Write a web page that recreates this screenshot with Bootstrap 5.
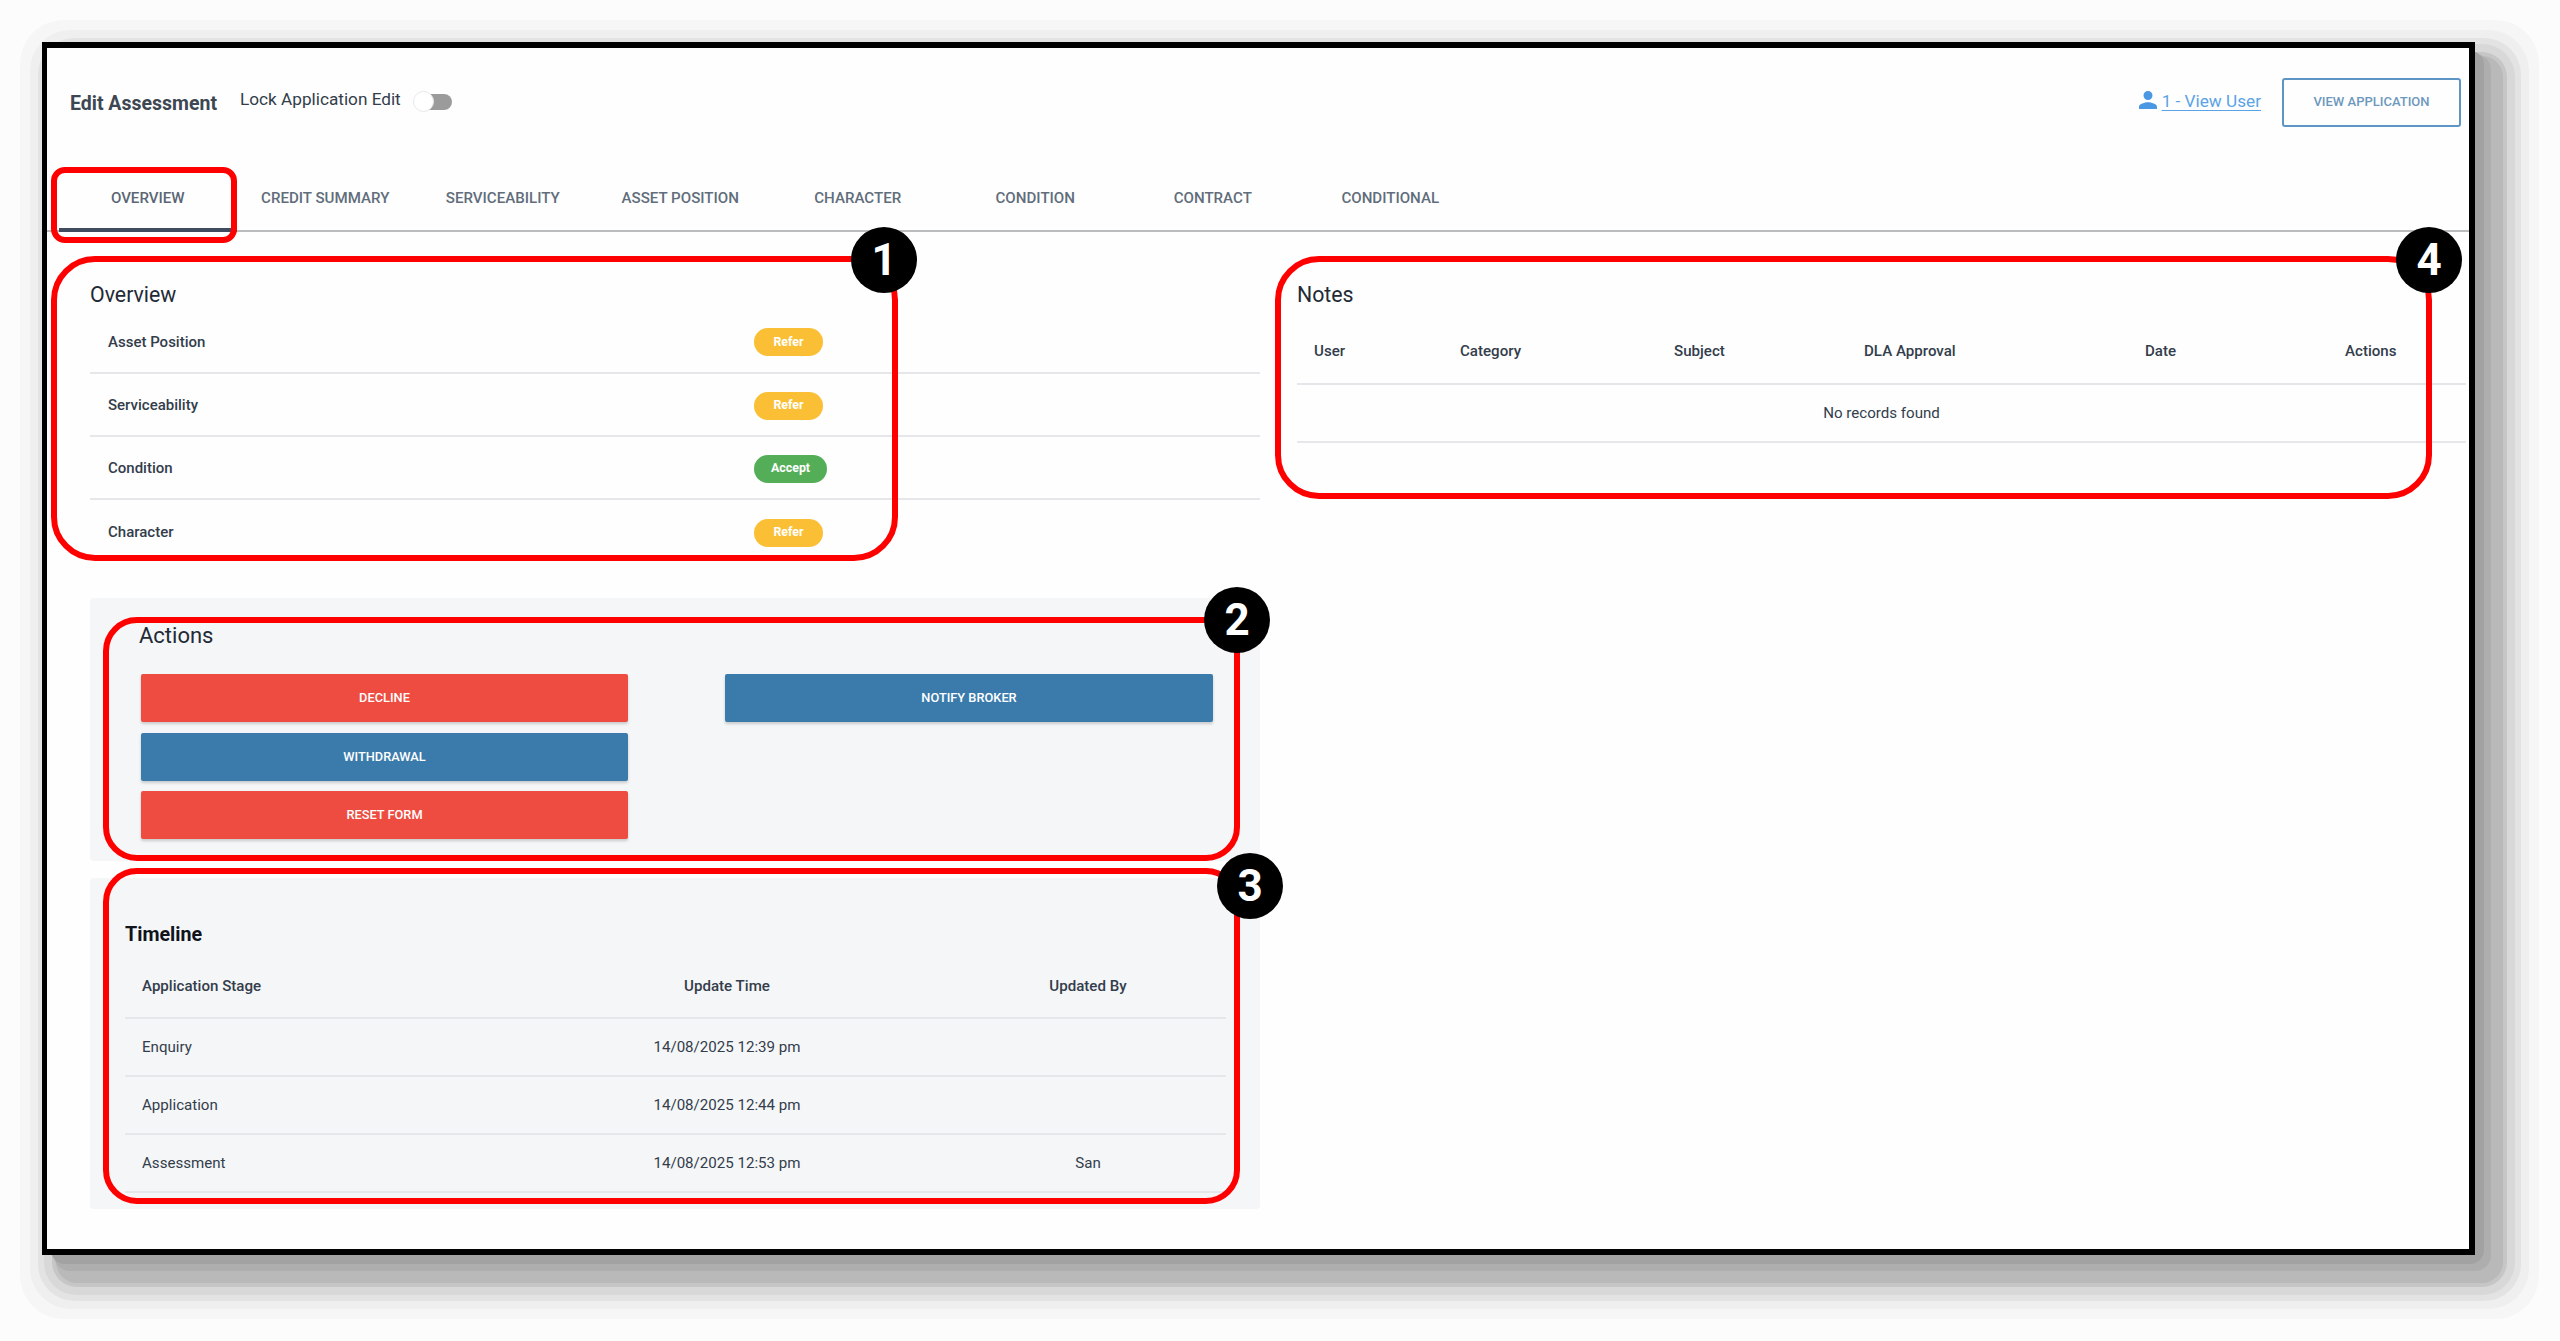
<!doctype html>
<html lang="en">
<head>
<meta charset="utf-8">
<title>Edit Assessment</title>
<link href="https://cdn.jsdelivr.net/npm/bootstrap@5.3.0/dist/css/bootstrap.min.css" rel="stylesheet">
<style>
html,body{height:100%;overflow:hidden}
body{background:#fcfcfc;font-family:Roboto,"Liberation Sans",sans-serif;color:#333d4b;position:relative}
.shell{width:2433px;height:1213px;margin:42px 0 0 42px;border-radius:14px;
 box-shadow:9px 9px 0 0 #a2a2a2,14px 14px 0 2px #aeaeae,21px 21px 0 7px #b9b9b9,21px 21px 0 11px #c6c6c6,21px 21px 0 19px #d8d8d8,21px 21px 0 25px #e3e3e3,21px 21px 0 33px #efefef,21px 21px 0 43px #f6f6f6}
.frame{height:100%;background:#fefefe;border:solid #000;border-width:6px 6px 6px 5px}
.topbar{height:108px;padding:0 8px 0 23px}
.page-title{font-size:19.5px;font-weight:700;color:#3d4653;margin:3px 23px 0 0}
.lock-label{font-size:17.2px;color:#333d4b;margin:-4px 14px 0 0}
.toggle-track{width:32px;height:16px;background:#9b9b9b;border-radius:8px;position:relative;margin-left:5px}
.toggle-thumb{width:21px;height:21px;border-radius:50%;background:#fff;border:1px solid #e6e8eb;position:absolute;left:-7px;top:-3px}
.user-link{font-size:17.2px;color:#5aa3e6;margin-right:21px;text-decoration-thickness:1px;text-underline-offset:3px}
.user-icon{width:18px;height:18px;fill:#4a97e4;margin-right:5px;vertical-align:-2px}
.view-btn{width:179px;height:49px;border:2px solid #5d96c4;color:#6d98bd;font-size:13px;font-weight:500;border-radius:3px;padding:0;background:transparent}
.tabs-bar{height:76px;border-bottom:2px solid #bbbcbe;padding-left:12px;flex-wrap:nowrap}
.tabs-bar .nav-link{width:177.5px;height:76px;padding:8px 0 0;text-align:center;color:#616d7b;font-size:15.1px;font-weight:500;display:flex;align-items:center;justify-content:center;border-radius:0}
.tabs-bar .nav-link.active{color:#5a6675;box-shadow:inset 0 -4px 0 #3f4b5e}
.main-area{padding-left:43px}
.left-pane{width:1170px;flex:none}
.right-pane{width:1169px;flex:none;margin-left:37px}
.pane-title{font-size:21.3px;line-height:24px;font-weight:400;color:#222a35;margin:51px 0 0}
.score-list{margin-top:3px}
.score-list .list-group-item{height:63px;background:transparent;padding:2px 0 0 18px;border-color:#e6e7ea;border-width:0 0 2px;display:flex;align-items:center;font-size:15px;font-weight:500;color:#333d4b}
.score-list .list-group-item:first-child{height:64px}
.score-label{width:646px;flex:none}
.pill-refer,.pill-accept{height:28px;display:inline-flex;align-items:center;justify-content:center;font-size:12.4px;font-weight:700;color:#fff}
.pill-refer{width:69px;background:#fbbf35}
.pill-accept{width:73px;background:#54ae57}
.soft-panel{background:#f5f6f8;border-radius:4px}
.actions-panel{height:263px;margin-top:35px;padding:26px 47px 0 51px}
.actions-title{font-size:22px;line-height:24px;color:#222a35;margin:0 0 26px -2px;font-weight:400}
.actions-grid{display:grid;grid-template-columns:487px 488px;column-gap:97px;row-gap:10.5px;align-items:start}
.action-btn{height:48px;font-size:12.8px;font-weight:500;color:#fff;border:0;border-radius:2px;box-shadow:0 2px 3px rgba(0,0,0,.18);padding:0}
.btn-red{background:#ee4c40}
.btn-blue{background:#3b7bac}
.btn-red:hover{background:#ee4c40;color:#fff}
.btn-blue:hover{background:#3b7bac;color:#fff}
.timeline-panel{height:331px;margin-top:17px;padding:45px 34px 0 35px}
.timeline-title{font-size:19.7px;line-height:24px;font-weight:700;color:#10151c;margin:0 0 9px}
.table.plain-table{margin:0;table-layout:fixed;--bs-table-bg:transparent;--bs-table-border-color:#e6e7ea;border-collapse:collapse;font-size:15.1px;color:#333d4b}
.table.plain-table>*>*>*{padding:0 17px;vertical-align:middle;border-bottom-width:2px;color:#333d4b;background:transparent;font-weight:400;box-shadow:none}
.table.plain-table th{font-weight:500}
.timeline-table tr{height:58px}
.timeline-table thead tr{height:62px}
.table.notes-table{margin-top:13px;width:1169px}
.notes-table thead tr{height:64px}
.notes-table tbody tr{height:58px}
.w146{width:146px}.w214{width:214px}.w190{width:190px}.w281{width:281px}.w200{width:200px}.w138{width:138px}
.w379{width:379px}.w446{width:446px}.w276{width:276px}
.ring{position:absolute;border:6px solid #f00;pointer-events:none}
.ring-tab{left:51px;top:167px;width:186px;height:76px;border-radius:14px}
.ring-one{left:51px;top:256px;width:847px;height:305px;border-radius:44px}
.ring-two{left:103px;top:617px;width:1137px;height:244px;border-radius:34px}
.ring-three{left:103px;top:868px;width:1137px;height:336px;border-radius:34px}
.ring-four{left:1275px;top:256px;width:1157px;height:243px;border-radius:44px}
.num{position:absolute;width:66px;height:66px;border-radius:50%;background:#000;color:#fff;font:700 44px/66px Roboto,"Liberation Sans",sans-serif;text-align:center}
.num-one{left:851px;top:227px}
.num-two{left:1204px;top:587px}
.num-three{left:1217px;top:853px}
.num-four{left:2396px;top:227px}
</style>
</head>
<body>
<div class="shell">
<div class="frame">
  <div class="topbar d-flex align-items-center">
    <h1 class="page-title">Edit Assessment</h1>
    <span class="lock-label">Lock Application Edit</span>
    <span class="toggle-track"><span class="toggle-thumb"></span></span>
    <span class="ms-auto d-flex align-items-center">
      <a class="user-link" href="#"><svg class="user-icon" viewBox="4 4 16 16"><path d="M12 12c2.21 0 4-1.79 4-4s-1.79-4-4-4-4 1.79-4 4 1.79 4 4 4zm0 2c-2.67 0-8 1.34-8 4v2h16v-2c0-2.66-5.33-4-8-4z"/></svg>1 - View User</a>
      <button class="btn view-btn" type="button">VIEW APPLICATION</button>
    </span>
  </div>
  <nav class="nav tabs-bar">
    <a class="nav-link active" href="#">OVERVIEW</a>
    <a class="nav-link" href="#">CREDIT SUMMARY</a>
    <a class="nav-link" href="#">SERVICEABILITY</a>
    <a class="nav-link" href="#">ASSET POSITION</a>
    <a class="nav-link" href="#">CHARACTER</a>
    <a class="nav-link" href="#">CONDITION</a>
    <a class="nav-link" href="#">CONTRACT</a>
    <a class="nav-link" href="#">CONDITIONAL</a>
  </nav>
  <div class="main-area d-flex">
    <div class="left-pane">
      <h2 class="pane-title">Overview</h2>
      <ul class="list-group list-group-flush score-list">
        <li class="list-group-item"><span class="score-label">Asset Position</span><span class="badge rounded-pill pill-refer">Refer</span></li>
        <li class="list-group-item"><span class="score-label">Serviceability</span><span class="badge rounded-pill pill-refer">Refer</span></li>
        <li class="list-group-item"><span class="score-label">Condition</span><span class="badge rounded-pill pill-accept">Accept</span></li>
        <li class="list-group-item"><span class="score-label">Character</span><span class="badge rounded-pill pill-refer">Refer</span></li>
      </ul>
      <section class="soft-panel actions-panel">
        <h2 class="actions-title">Actions</h2>
        <div class="actions-grid">
          <button class="btn action-btn btn-red" type="button">DECLINE</button>
          <button class="btn action-btn btn-blue" type="button">NOTIFY BROKER</button>
          <button class="btn action-btn btn-blue" type="button">WITHDRAWAL</button>
          <span></span>
          <button class="btn action-btn btn-red" type="button">RESET FORM</button>
        </div>
      </section>
      <section class="soft-panel timeline-panel">
        <h2 class="timeline-title">Timeline</h2>
        <table class="table plain-table timeline-table">
          <colgroup><col class="w379"><col class="w446"><col class="w276"></colgroup>
          <thead><tr><th>Application Stage</th><th class="text-center">Update Time</th><th class="text-center">Updated By</th></tr></thead>
          <tbody>
            <tr><td>Enquiry</td><td class="text-center">14/08/2025 12:39 pm</td><td></td></tr>
            <tr><td>Application</td><td class="text-center">14/08/2025 12:44 pm</td><td></td></tr>
            <tr><td>Assessment</td><td class="text-center">14/08/2025 12:53 pm</td><td class="text-center">San</td></tr>
          </tbody>
        </table>
      </section>
    </div>
    <div class="right-pane">
      <h2 class="pane-title">Notes</h2>
      <table class="table plain-table notes-table">
        <colgroup><col class="w146"><col class="w214"><col class="w190"><col class="w281"><col class="w200"><col class="w138"></colgroup>
        <thead><tr><th>User</th><th>Category</th><th>Subject</th><th>DLA Approval</th><th>Date</th><th>Actions</th></tr></thead>
        <tbody><tr><td colspan="6" class="text-center">No records found</td></tr></tbody>
      </table>
    </div>
  </div>
</div>
</div>
<div class="ring ring-tab"></div>
<div class="ring ring-one"></div>
<div class="ring ring-two"></div>
<div class="ring ring-three"></div>
<div class="ring ring-four"></div>
<div class="num num-one">1</div>
<div class="num num-two">2</div>
<div class="num num-three">3</div>
<div class="num num-four">4</div>
<script src="https://cdn.jsdelivr.net/npm/bootstrap@5.3.0/dist/js/bootstrap.bundle.min.js"></script>
</body>
</html>
